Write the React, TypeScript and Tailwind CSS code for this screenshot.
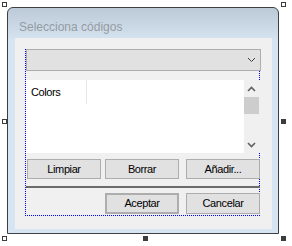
const font = { fontFamily: '"Liberation Sans", Arial, sans-serif' };

function Chevron({ up = false, thick = false }: { up?: boolean; thick?: boolean }) {
  return (
    <svg width="9" height="6" viewBox="0 0 9 6" className="block">
      <path
        d={up ? 'M1 5 L4.5 1.5 L8 5' : 'M1 1 L4.5 4.5 L8 1'}
        fill="none"
        stroke={thick ? '#606060' : '#404040'}
        strokeWidth={thick ? 1.6 : 1}
      />
    </svg>
  );
}

function Handle({ className, filled = false }: { className: string; filled?: boolean }) {
  return (
    <div
      className={`absolute w-[5px] h-[5px] border border-[#3c3c3c] ${
        filled ? 'bg-[#3c3c3c]' : 'bg-white'
      } ${className}`}
    />
  );
}

function Button({ label, className = '' }: { label: string; className?: string }) {
  return (
    <div
      className={`w-[74px] flex items-center justify-center bg-[#e1e1e1] border border-[#adadad] text-[11px] tracking-[-0.4px] text-black ${className}`}
    >
      {label}
    </div>
  );
}

export default function App() {
  return (
    <div className="relative w-[292px] h-[246px] bg-white overflow-hidden pt-[7px] pl-[7px]" style={font}>
      {/* designer selection handles */}
      <Handle className="left-[2px] top-[2px]" />
      <Handle className="left-[281px] top-[2px]" />
      <Handle className="left-[2px] top-[119px]" />
      <Handle className="left-[281px] top-[119px]" filled />
      <Handle className="left-[2px] top-[236px]" />
      <Handle className="left-[143px] top-[236px]" filled />
      <Handle className="left-[281px] top-[236px]" filled />

      {/* window */}
      <div className="w-[272px] h-[227px] border border-[#3f3f3f] rounded-t-[6px] flex flex-col bg-[linear-gradient(#bccad8,#d7e4f2_34px)]">
        <div className="h-[30px] pl-[11px] pt-[12px]">
          <div className="text-[12px] leading-[14px] text-[#959ba2]">Selecciona códigos</div>
        </div>

        {/* client area */}
        <div className="relative ml-[7px] w-[257px] h-[191px] bg-[#f0f0f0] pl-[11px] pt-[11px]">
          <div className="absolute left-[10px] top-[11px] w-[235px] h-[167px] border border-dotted border-[#0000ff]" />

          <div className="relative w-[234px] flex flex-col">
            {/* combo */}
            <div className="w-[235px] h-[22px] border border-[#adadad] bg-[#e1e1e1] flex items-center justify-end pr-[4px]">
              <Chevron />
            </div>

            {/* list */}
            <div className="mt-[9px] h-[73px] flex">
              <div className="w-[218px] bg-white">
                <div className="w-[61px] h-[24px] border-r border-[#e6e6e6] pl-[5px] pt-[6px] text-[11px] leading-[13px] tracking-[-0.4px] text-black">
                  Colors
                </div>
              </div>
              <div className="w-[16px] bg-[#f0f0f0] flex flex-col">
                <div className="h-[17px] flex items-center justify-center pr-px">
                  <Chevron up thick />
                </div>
                <div className="w-[15px] h-[17px] bg-[#cdcdcd]" />
                <div className="flex-1" />
                <div className="h-[17px] flex items-center justify-center pr-px">
                  <Chevron thick />
                </div>
              </div>
            </div>

            {/* buttons */}
            <div className="mt-[6px] h-[20px] flex">
              <Button label="Limpiar" className="ml-px" />
              <Button label="Borrar" className="ml-[4px]" />
              <Button label="Añadir..." className="ml-[7px]" />
            </div>

            <div className="mt-[7px] h-[2px] bg-[#6b6b6b]" />

            <div className="mt-[5px] h-[21px] flex">
              <Button label="Aceptar" className="ml-[79px] border-2 border-[#0078d7]" />
              <Button label="Cancelar" className="ml-[7px]" />
            </div>
          </div>
        </div>
      </div>
    </div>
  );
}
